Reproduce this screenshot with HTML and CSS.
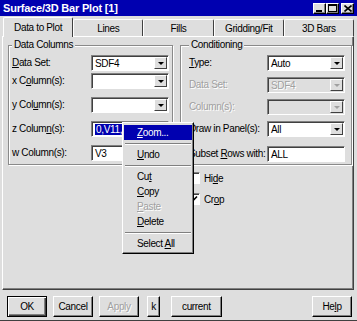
FILE: index.html
```html
<!DOCTYPE html>
<html lang="en">
<head>
  <meta charset="UTF-8" />
  <title>Surface/3D Bar Plot [1]</title>
  <link rel="stylesheet" href="styles.css">
</head>
<body>
  <div class="window">
    <div class="titlebar">
      <span class="title">Surface/3D Bar Plot [1]</span>
      <div class="title-btns">
        <span class="tbtn"><svg width="7" height="7" viewBox="0 0 7 7"><rect x="0" y="5" width="6" height="2" fill="#000"/></svg></span>
        <span class="tbtn"><svg width="9" height="8" viewBox="0 0 9 8"><rect x="0.5" y="0.5" width="8" height="7" fill="none" stroke="#000"/><rect x="0" y="0" width="9" height="2" fill="#000"/></svg></span>
        <span class="tbtn close"><svg width="8" height="7" viewBox="0 0 8 7"><path d="M0.5 0.5 L7.5 6.5 M7.5 0.5 L0.5 6.5" stroke="#000" stroke-width="1.6"/></svg></span>
      </div>
    </div>

    <div class="tabs">
      <div class="tab active">Data to Plot</div>
      <div class="tab">Lines</div>
      <div class="tab">Fills</div>
      <div class="tab">Gridding/Fit</div>
      <div class="tab">3D Bars</div>
    </div>

    <div class="panel">
      <div class="groups">
        <fieldset class="group left">
          <legend>Data Columns</legend>
          <div class="rows">
            <label><u>D</u>ata Set:</label>
            <div class="combo"><span class="val">SDF4</span><span class="drop"></span></div>
            <label>x C<u>o</u>lumn(s):</label>
            <div class="combo"><span class="val"></span><span class="drop"></span></div>
            <label>y Col<u>u</u>mn(s):</label>
            <div class="combo"><span class="val"></span><span class="drop"></span></div>
            <label>z Colum<u>n</u>(s):</label>
            <div class="edit"><span class="sel">0,V11,V12,V13</span></div>
            <label>w Column(s):</label>
            <div class="edit">V3</div>
          </div>
        </fieldset>

        <fieldset class="group right">
          <legend>Conditioning</legend>
          <div class="rows">
            <label><u>T</u>ype:</label>
            <div class="combo"><span class="val">Auto</span><span class="drop"></span></div>
            <label class="off">Data Set:</label>
            <div class="combo off"><span class="val">SDF4</span><span class="drop"></span></div>
            <label class="off">Column(s):</label>
            <div class="combo off"><span class="val"></span><span class="drop"></span></div>
            <label>Draw in Panel(s):</label>
            <div class="combo"><span class="val">All</span><span class="drop"></span></div>
            <label>Subset <u>R</u>ows with:</label>
            <div class="edit">ALL</div>
          </div>
        </fieldset>
      </div>

      <div class="checks">
        <div class="check"><span class="box"></span><span>Hi<u>d</u>e</span></div>
        <div class="check">
          <span class="box"><svg width="8" height="8" viewBox="0 0 8 8"><path d="M1 3.5 L3 5.5 L7 1.5" fill="none" stroke="#000" stroke-width="1.6"/></svg></span>
          <span>Cr<u>o</u>p</span>
        </div>
      </div>
    </div>

    <div class="buttons">
      <div class="btn default">OK</div>
      <div class="btn">Cancel</div>
      <div class="btn off">Apply</div>
      <div class="btn small">k</div>
      <div class="btn wide">current</div>
      <div class="btn help">He<u>l</u>p</div>
    </div>

    <div class="menu">
      <div class="mi hl"><u>Z</u>oom...</div>
      <div class="msep"></div>
      <div class="mi"><u>U</u>ndo</div>
      <div class="msep"></div>
      <div class="mi">Cu<u>t</u></div>
      <div class="mi"><u>C</u>opy</div>
      <div class="mi off"><u>P</u>aste</div>
      <div class="mi"><u>D</u>elete</div>
      <div class="msep"></div>
      <div class="mi">Select <u>A</u>ll</div>
    </div>
  </div>
</body>
</html>
```

FILE: styles.css
```css
* {
  box-sizing: border-box;
}

body {
  margin: 0;
  font-family: "Liberation Sans", Arial, sans-serif;
  font-size: 10px;
  letter-spacing: -0.35px;
  color: #000;
  background: #dedede;
}

.window {
  position: relative;
  width: 357px;
  height: 321px;
  background: #dedede;
  border-bottom: 1px solid #404040;
  overflow: hidden;
}

/* title bar */
.titlebar {
  height: 16px;
  background: #0000b0;
  color: #fff;
  display: flex;
  align-items: center;
  justify-content: space-between;
  padding: 0 3px;
}

.title {
  font-weight: bold;
  font-size: 11px;
  letter-spacing: -0.2px;
}

.title-btns {
  display: flex;
}

.tbtn {
  width: 13px;
  height: 11px;
  background: #dedede;
  border: 1px solid;
  border-color: #fff #000 #000 #fff;
  box-shadow: inset -1px -1px #808080;
  display: flex;
  align-items: center;
  justify-content: center;
}

.tbtn.close {
  margin-left: 2px;
}

/* tabs */
.tabs {
  display: flex;
  align-items: flex-end;
  height: 20px;
  padding: 0 3px;
}

.tab {
  flex: 1;
  height: 17px;
  border: 1px solid;
  border-color: #fff #404040 transparent #fff;
  border-bottom: none;
  border-radius: 2px 2px 0 0;
  display: flex;
  align-items: center;
  justify-content: center;
}

.tab.active {
  height: 20px;
  margin-bottom: -1px;
  background: #dedede;
  position: relative;
  z-index: 1;
}

.panel {
  width: 352px;
  height: 254px;
  margin-left: 2px;
  border: 1px solid;
  border-color: #fff #404040 #404040 #fff;
  box-shadow: inset -1px -1px #808080;
}

/* group boxes */
.groups {
  display: flex;
  gap: 7px;
  margin: 2px 0 0 5px;
}

.group {
  margin: 0;
  border: 1px solid #8a8a8a;
  box-shadow: 1px 1px 0 #fff, inset 1px 1px 0 #fff;
  padding: 4px 3px 2px 3px;
}

.group legend {
  line-height: 12px;
  padding: 0 2px;
  background: #dedede;
}

.group.left {
  width: 165px;
}

.group.right {
  width: 172px;
  padding-left: 8px;
}

.rows {
  display: grid;
  align-items: start;
}

.left .rows {
  grid-template-columns: 79px 78px;
  grid-template-rows: 18px 24px 24px 24px 16px;
}

.right .rows {
  grid-template-columns: 78px 78px;
  grid-template-rows: 22px 22px 22px 25px 16px;
}

.rows label {
  line-height: 16px;
  white-space: nowrap;
}

.off {
  color: #a0a0a0;
  text-shadow: 1px 1px 0 #fff;
}

.combo,
.edit {
  height: 16px;
  background: #fff;
  border: 1px solid;
  border-color: #808080 #fff #fff #808080;
  box-shadow: inset 1px 1px #404040;
  display: flex;
  align-items: center;
  padding-left: 3px;
  white-space: nowrap;
  overflow: hidden;
}

.combo .val {
  flex: 1;
}

.combo.off {
  background: #dedede;
}

.drop {
  width: 13px;
  height: 12px;
  margin-right: 1px;
  background: #dedede;
  border: 1px solid;
  border-color: #fff #404040 #404040 #fff;
  display: flex;
  align-items: center;
  justify-content: center;
}

.drop::after {
  content: "";
  border-left: 3px solid transparent;
  border-right: 3px solid transparent;
  border-top: 3px solid #000;
}

.combo.off .drop::after {
  border-top-color: #a0a0a0;
}

.sel {
  background: #0000b0;
  color: #fff;
  padding: 0 1px;
}

/* checkboxes */
.checks {
  display: flex;
  flex-direction: column;
  gap: 9px;
  margin: 7px 0 0 185px;
}

.check {
  display: flex;
  align-items: center;
  gap: 4px;
  height: 12px;
}

.box {
  width: 12px;
  height: 12px;
  background: #fff;
  border: 1px solid;
  border-color: #808080 #fff #fff #808080;
  box-shadow: inset 1px 1px #404040;
  display: flex;
  align-items: center;
  justify-content: center;
}

/* bottom buttons */
.buttons {
  display: flex;
  gap: 6px;
  height: 30px;
  padding: 6px 5px 0 7px;
}

.btn {
  width: 40px;
  height: 21px;
  border: 1px solid;
  border-color: #fff #000 #000 #fff;
  box-shadow: inset -1px -1px #808080;
  display: flex;
  align-items: center;
  justify-content: center;
}

.btn.default {
  border-color: #000;
  box-shadow: inset 1px 1px #fff, inset -1px -1px #404040, inset -2px -2px #808080;
}

.btn.small {
  width: 13px;
  margin-left: 2px;
}

.btn.wide {
  width: 51px;
  margin-left: 5px;
  justify-content: flex-start;
  padding-left: 10px;
}

.btn.help {
  margin-left: auto;
}

/* context menu */
.menu {
  position: absolute;
  left: 122px;
  top: 122px;
  width: 72px;
  padding: 2px 1px;
  background: #dedede;
  border: 1px solid;
  border-color: #fff #000 #000 #fff;
  box-shadow: inset -1px -1px #808080;
  z-index: 5;
}

.mi {
  height: 15px;
  line-height: 15px;
  padding-left: 13px;
}

.mi.hl {
  background: #0000b0;
  color: #fff;
}

.msep {
  height: 2px;
  margin: 3px 1px 2px;
  border-top: 1px solid #808080;
  border-bottom: 1px solid #fff;
}
```
